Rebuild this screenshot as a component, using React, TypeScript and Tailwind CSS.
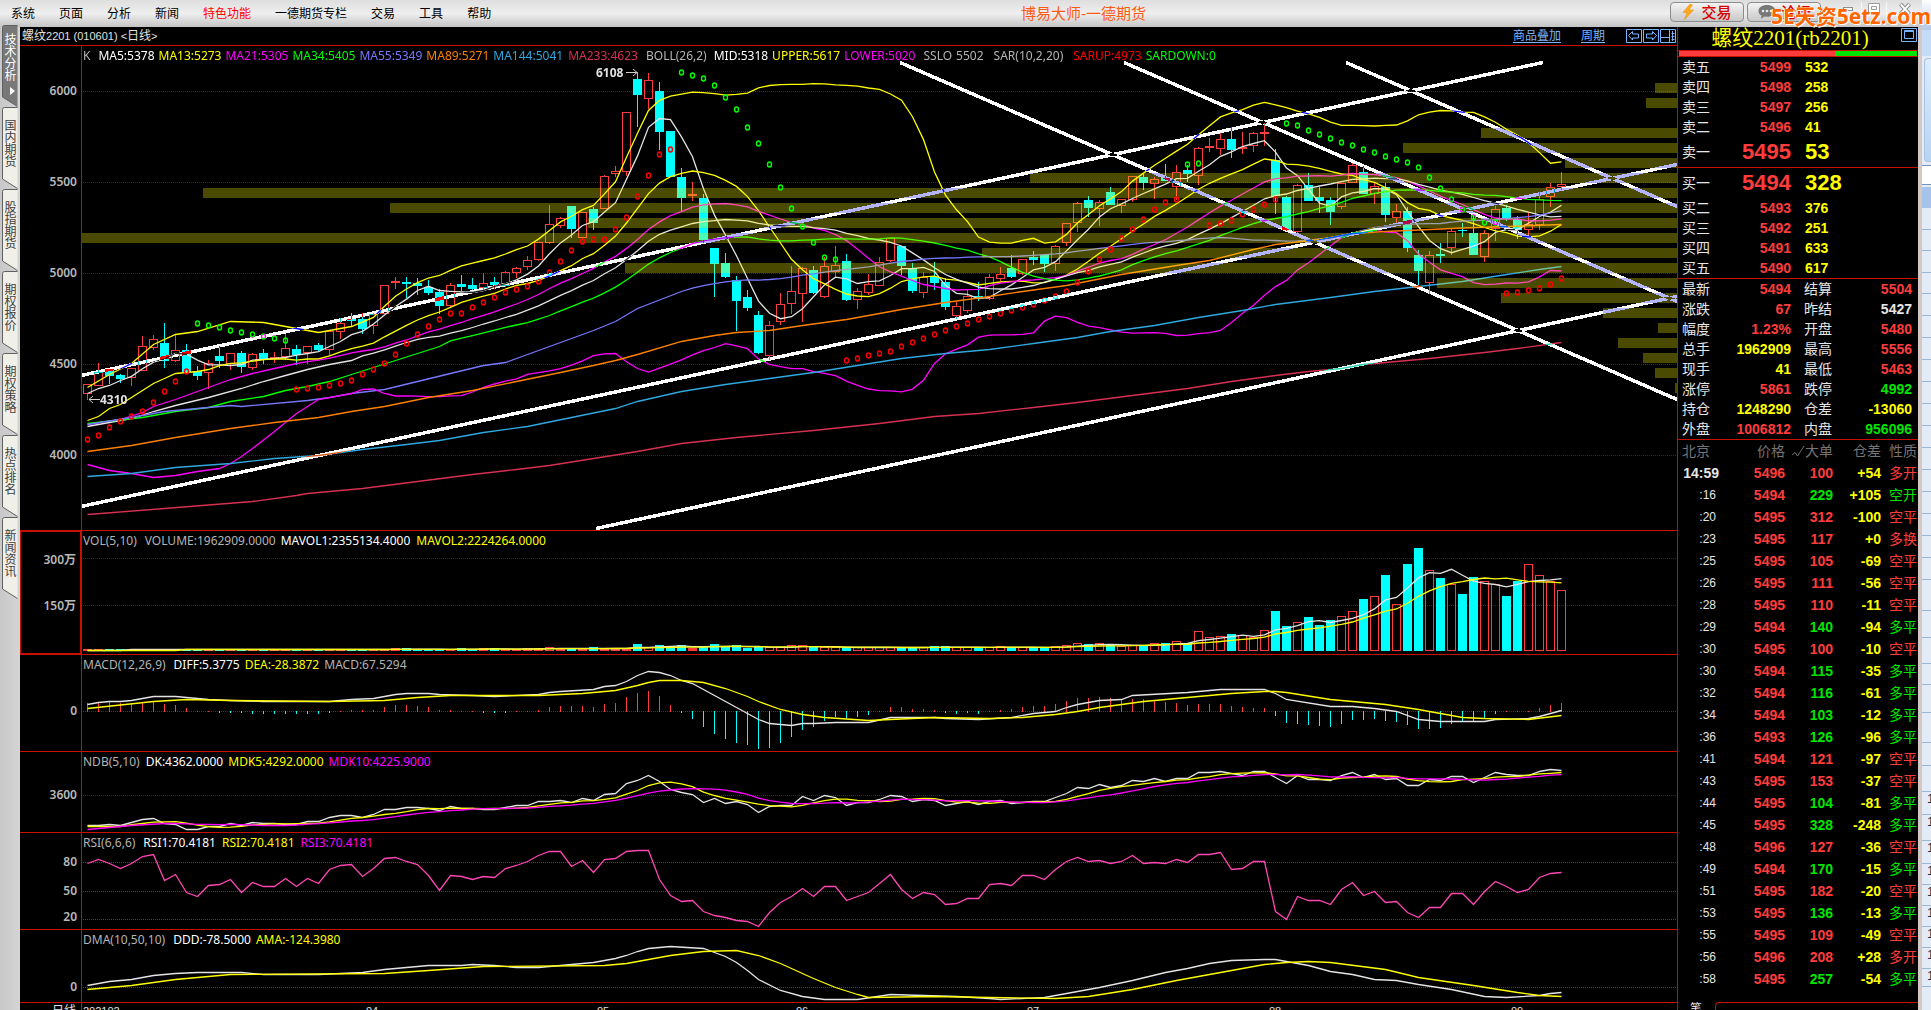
import React from "react";

const LEFT = 82;
const RIGHT = 1677;
const STEP = 11;
const cx = (i: number) => 87 + STEP * i;

const RED = "#ff3c3c";
const CYAN = "#00ffff";
const YELLOW = "#ffff00";
const MAGENTA = "#ff00ff";
const WHITE = "#e4e4e4";

// Each candle: direction (u/d), high, body top, body bottom, low.
const CANDLES = `
u 384 384 394 400;u 363 372 386 386;d 369 369 376 384;d 374 375 379 383;u 368 368 378 386;u 336 346 371 371;u 335 339 348 350;d 323 343 361 368;u 335 350 361 362;d 344 350 372 372;
d 366 371 376 380;u 360 363 373 389;d 346 356 361 368;u 353 353 364 370;d 351 353 367 373;u 353 354 368 370;d 349 353 359 364;u 352 357 358 363;u 334 348 357 360;d 345 349 355 365;
u 346 346 353 364;d 343 345 350 351;u 331 331 350 356;u 318 323 332 339;d 313 319 321 326;d 313 319 329 334;u 313 314 326 334;u 285 285 314 314;u 277 281 283 289;d 277 282 284 298;
d 278 283 286 295;d 280 287 293 295;d 289 292 306 314;u 283 285 306 307;d 275 284 287 291;d 278 285 289 290;u 273 283 288 291;d 277 282 285 289;u 271 272 286 287;u 267 268 273 278;
u 256 260 267 270;u 242 242 260 261;u 205 224 243 244;u 217 218 226 228;d 206 206 229 238;u 212 212 238 239;d 207 209 223 230;u 175 176 209 209;u 166 171 174 177;u 112 112 172 176;
d 72 79 95 127;u 73 80 99 109;d 82 91 132 150;d 131 131 177 177;d 168 177 198 211;u 182 194 196 201;d 194 198 240 243;d 248 248 264 297;d 253 263 277 278;d 276 280 301 331;
d 290 297 308 311;d 311 315 353 354;u 321 325 356 360;u 293 304 322 325;u 266 291 304 314;u 267 268 294 322;d 266 270 293 294;u 257 266 297 298;u 246 265 272 277;d 254 261 300 301;
u 288 291 300 309;u 274 284 293 295;u 257 262 286 286;u 238 238 261 262;d 246 246 266 275;d 263 268 291 293;u 272 277 293 298;d 262 277 283 290;d 278 282 307 310;u 302 306 316 319;
u 289 296 311 313;d 282 296 298 301;u 274 277 299 300;u 267 274 279 281;d 255 268 277 278;u 259 259 274 275;d 251 257 260 265;d 255 255 264 272;u 245 246 264 271;u 223 223 243 246;
u 202 203 223 232;d 196 200 208 217;u 200 202 209 226;d 187 192 205 205;u 199 199 206 213;u 176 176 200 202;d 173 177 183 190;u 177 179 184 199;d 164 178 181 181;u 165 172 187 200;
d 165 170 174 182;u 147 148 176 185;u 138 146 147 152;u 133 139 149 155;d 127 139 150 158;u 132 147 149 154;u 132 133 146 152;u 123 132 134 146;d 149 160 196 214;d 196 197 230 231;
u 184 185 232 233;d 173 185 201 201;d 187 197 201 213;d 197 200 212 225;u 183 183 207 209;u 163 165 183 183;d 166 172 194 194;u 182 186 194 204;d 183 187 215 222;u 204 211 218 223;
d 207 211 248 252;d 250 255 271 286;u 251 255 283 294;d 243 254 256 263;u 229 231 248 255;d 223 230 231 237;d 216 233 255 255;u 230 233 257 262;u 206 209 229 241;d 205 208 218 221;
d 216 219 230 239;u 212 224 230 235;u 192 199 225 230;u 183 187 197 207;u 172 184 187 190`
  .trim()
  .split(";")
  .map((row) => {
    const [dir, h, t, b, l] = row.trim().split(" ");
    return { up: dir === "u", high: +h, top: +t, bottom: +b, low: +l };
  });

const nums = (s: string) => s.trim().split(/\s+/).map(Number);

const CLOSES = CANDLES.map((c) => (c.up ? c.top : c.bottom));

type Pt = [number, number];
const pts = (s: string): Pt[] =>
  s.trim().split(/\s+/).map((p) => p.split(",").map(Number) as Pt);

function average(values: number[], n: number, lead: string): Pt[] {
  const out: Pt[] = pts(lead);
  for (let i = n - 1; i < values.length; i++) {
    let sum = 0;
    for (let k = 0; k < n; k++) sum += values[i - k];
    out.push([i, sum / n]);
  }
  return out;
}

function band(values: number[], n: number, side: number, lead: string): Pt[] {
  const out: Pt[] = pts(lead);
  for (let i = n; i < values.length; i++) {
    const win = values.slice(i - n + 1, i + 1);
    const mean = win.reduce((a, b) => a + b, 0) / n;
    const sd = Math.sqrt(win.reduce((a, b) => a + (b - mean) ** 2, 0) / (n - 1));
    out.push([i, mean + side * 2 * sd]);
  }
  return out;
}

function Line({ data, color }: { data: Pt[]; color: string }) {
  return (
    <polyline
      fill="none"
      stroke={color}
      strokeWidth={1.3}
      points={data.map(([i, y]) => `${cx(i) + 0.5},${(y + 0.5).toFixed(1)}`).join(" ")}
    />
  );
}

function Plot({ top, height, children }: { top: number; height: number; children: React.ReactNode }) {
  return (
    <svg
      className="absolute inset-0 h-full w-full"
      viewBox={`${LEFT} ${top} ${RIGHT - LEFT} ${height}`}
      preserveAspectRatio="none"
      aria-hidden="true"
    >
      {children}
    </svg>
  );
}

function Grid({ ys, color = "#960000" }: { ys: number[]; color?: string }) {
  return (
    <>
      {ys.map((y) => (
        <line key={y} x1={LEFT + 1} x2={RIGHT} y1={y + 0.5} y2={y + 0.5} stroke={color} strokeDasharray="1 1" />
      ))}
    </>
  );
}

const PROFILE: Pt[] = [
  [83, 1655], [98, 1646], [128, 1481], [143, 1403], [158, 1565], [173, 1030], [188, 203], [203, 390],
  [218, 588], [233, 81], [248, 982], [263, 625], [278, 1437], [293, 1501], [308, 1603], [323, 1658],
  [338, 1618], [353, 1643], [368, 1655], [383, 1675],
];

const TRENDS = [
  [81, 375, 1543, 62], [81, 506, 1677, 164], [596, 528, 1677, 296],
  [900, 62, 1677, 399], [1124, 62, 1677, 301], [1346, 62, 1677, 206],
];

// Parabolic SAR runs: first index, colour, then one level for each bar.
const SAR: { start: number; color: string; ys: number[] }[] = [
  { start: 0, color: "#ff0000", ys: nums("439 435 427 421 416 411 402 391 381 371") },
  { start: 10, color: "#00ff00", ys: nums("323 325 327 330 332 334 336 338 340") },
  { start: 19, color: "#ff0000", ys: nums("389 388 387 385 383 380 374 369 363 354 343 334 326 319 313 313 307 302 297 292 289 286 281 272 261 250 241 239 239 229 217 196 175 154 149") },
  { start: 54, color: "#00ff00", ys: nums("72 75 78 85 97 109 127 143 164 187 208 226 242 257 259") },
  { start: 69, color: "#ff0000", ys: nums("360 358 355 353 351 346 342 338 334 330 326 323 319 316 313 310 307 304 300 296 291 282 271 259 249 238 229 219 209 202 199") },
  { start: 100, color: "#00ff00", ys: nums("164 163") },
  { start: 102, color: "#ff0000", ys: nums("225 223 220 214 209 204 199") },
  { start: 109, color: "#00ff00", ys: nums("123 125 130 134 138 142 145 149 152 156 159 162 167 177 188 199 209 217 222 222") },
  { start: 129, color: "#ff0000", ys: nums("293 292 290 288 284 278") },
];

function PricePlot() {
  return (
    <Plot top={46} height={484}>
      <rect x={LEFT} y={46} width={RIGHT - LEFT} height={484} fill="#000" />
      <Grid ys={[91, 182, 273, 364, 455]} />
      <g shapeRendering="crispEdges">
        {CANDLES.map((c, i) => {
          const x = cx(i);
          const color = c.up ? RED : CYAN;
          return (
            <g key={i}>
              {c.high < c.top && <rect x={x} y={c.high} width={1} height={c.top - c.high} fill={color} />}
              {c.low > c.bottom && <rect x={x} y={c.bottom} width={1} height={c.low - c.bottom} fill={color} />}
              {c.up ? (
                <rect x={x - 3.5} y={c.top + 0.5} width={8} height={Math.max(1, c.bottom - c.top - 1)} fill="none" stroke={color} />
              ) : (
                <rect x={x - 4} y={c.top} width={9} height={c.bottom - c.top} fill={color} />
              )}
            </g>
          );
        })}
      </g>
      <Line color={WHITE} data={average(CLOSES, 5, "0,393 1,388 2,385 3,380")} />
      <Line color={YELLOW} data={average(CLOSES, 13, "0,420 1,416 2,408 3,404 4,397 5,390 6,383 7,378 8,373 9,372 10,371 11,369")} />
      <Line color={MAGENTA} data={average(CLOSES, 21, "0,424 3,419 5,412 6,406 8,399 10,391 11,387 13,379 15,373 17,368 19,363")} />
      <Line color={WHITE} data={average(CLOSES, 26, "0,426 4,418 6,411 8,405 11,397 14,388 16,381 18,375 20,369 22,364 24,360")} />
      <Line color="#00ff00" data={average(CLOSES, 34, "0,423 5,417 8,411 11,407 13,401 16,396 18,390 20,386 22,381 24,374 26,367 28,360 30,353 32,346")} />
      <Line color="#7878ff" data={average(CLOSES, 55, "0,424 4,417 7,411 9,409 13,405 14,406 20,400 22,397 24,393 27,389 30,381 33,373 36,365 38,362 40,354 43,342 46,330 48,321 50,308")} />
      <Line color={YELLOW} data={band(CLOSES, 26, -1, "0,387 2,374 4,363 6,344 8,334 10,331 13,321 16,322 19,328 21,332 24,326")} />
      <Line color={MAGENTA} data={band(CLOSES, 26, 1, "0,464 2,470 4,473 6,477 8,475 10,471 12,468 13,463 14,456 15,448 17,431 19,413 21,399 24,393 25,389")} />
      <Line color="#ff8000" data={pts("0,451 4,445 8,437 13,428 17,422 21,417 24,411 27,406 31,397 35,390 39,381 43,372 46,365 48,360 50,354 54,341 57,335 59,332 62,330 65,325 69,319 74,309 78,302 82,296 85,291 89,285 94,274 99,265 102,260 106,249 108,244 112,239 115,233 118,231 124,228 129,226 134,224")} />
      <Line color="#2fa8e0" data={pts("0,476 4,473 8,467 13,463 17,458 21,455 25,449 29,444 32,440 36,432 40,426 44,417 48,408 50,401 54,391 58,384 62,378 66,372 70,365 74,358 78,353 82,349 86,343 90,337 93,331 97,325 101,317 105,310 108,304 113,297 117,291 121,286 125,281 129,274 132,269 134,266")} />
      <Line color="#d83050" data={pts("0,514 7,508 15,501 19,495 20,493 25,488 30,481 35,474 39,469 42,465 46,458 50,451 54,443 59,437 66,430 72,423 77,416 81,413 86,407 90,402 95,395 100,388 104,381 108,375 111,371 114,368 116,364 122,358 127,352 130,348 134,342")} />
      {PROFILE.map(([y, x]) => (
        <rect key={y} x={x} y={y} width={RIGHT - x} height={10} fill="#ffff00" fillOpacity={0.29} />
      ))}
      {SAR.map((run) =>
        run.ys.map((y, k) => (
          <ellipse key={`${run.start}-${k}`} cx={cx(run.start + k) + 0.5} cy={y + 0.5} rx={2} ry={2.5} fill="none" stroke={run.color} strokeWidth={1.4} />
        )),
      )}
      {TRENDS.map(([x1, y1, x2, y2]) => (
        <line
          key={`${x1}-${y1}`}
          x1={x1}
          y1={y1 + 0.5}
          x2={x2}
          y2={y2 + 0.5}
          stroke="#fff"
          strokeWidth={3.5}
          shapeRendering="crispEdges"
          className="mix-blend-difference"
        />
      ))}
      <g fill="#e0e0e0" className="text-[12px] font-bold [font-family:'Noto_Sans','Liberation_Sans',sans-serif]">
        <text x={596} y={77}>6108</text>
        <text x={100} y={404}>4310</text>
      </g>
      <path d="M626 72.5h11m-4-3.500l4 3.500l-4 3.500M100 399.500h-11m4-3.500l-4 3.500l4 3.500" fill="none" stroke="#d0d0d0" />
    </Plot>
  );
}

const VOL_TOPS = nums(`
649 649 649 649 649 649 649 649 649 649 649 649 649 649 649 649 649 649 649 649 649 649 649 649 649 649 649 649 648 648
649 649 649 649 648 649 648 648 649 649 648 648 647 648 648 649 647 648 648 648 644 647 645 646 645 648 647 644 646 645
648 647 647 647 645 645 647 647 647 647 647 647 647 647 647 647 647 646 646 647 647 647 647 646 647 647 647 647 646 645
643 644 643 645 646 645 645 643 643 641 643 631 637 636 634 635 637 630 611 626 622 617 625 620 616 611 599 596 575 604
564 548 570 578 584 594 577 581 584 596 581 564 575 581 590`);

const MACD = nums(`
8 9 9 8 7 8 10 7 6 3 0 0 -1 -1 -1 -2 -2 -2 -2 -2 -2 -2 -1 0 1 1 1 4 6 6 5 4 1 1 0 0 -1 -1 -1 0 0 1 4 5 5 5 4 7 8 14
18 20 15 6 -1 -7 -15 -22 -27 -31 -33 -37 -36 -31 -25 -18 -15 -9 -5 -6 -5 -3 0 4 4 2 2 1 -1 -2 -1 -2 0 1 2 4 5 5 7 10
13 13 14 13 12 12 12 10 9 8 6 7 7 7 5 4 3 3 -4 -11 -12 -13 -14 -15 -12 -8 -8 -7 -9 -10 -13 -17 -17 -16 -12 -9 -9 -6 -2 0
0 0 3 6 8`);

const DK = nums(`
825 825 824 825 822 819 818 823 824 829 829 826 826 823 825 822 823 823 824 824 821 821 817 815 815 817 814 809 809 807
807 808 810 806 808 808 809 809 807 805 805 801 801 800 802 798 800 794 793 783 780 775 781 789 792 794 802 798 803 801
804 812 806 805 805 796 800 795 797 805 802 802 799 795 796 801 799 800 805 803 801 804 801 800 803 802 801 801 797 793
787 788 784 787 785 780 781 778 781 778 778 772 772 771 773 775 771 771 777 783 775 779 779 780 775 772 777 774 779 778
785 785 779 780 776 776 782 777 772 774 775 775 771 769 770`);

const RSI = nums(`
863 859 863 868 863 856 854 880 874 892 896 885 884 879 892 882 886 886 878 886 878 883 869 865 864 876 868 858 857 861
864 875 890 875 876 879 876 877 868 865 861 855 851 851 866 860 872 859 858 851 850 850 879 895 901 900 911 915 917 920
921 926 912 902 896 888 896 886 886 900 896 892 883 874 889 898 892 894 904 903 898 898 884 883 885 875 875 879 869 861
857 861 860 863 861 855 863 862 863 859 862 854 854 852 869 868 861 861 911 919 896 900 900 904 889 882 895 891 902 901
912 917 907 907 893 893 904 891 881 886 892 889 877 873 872`);

function VolumePlot() {
  return (
    <Plot top={531} height={123}>
      <Grid ys={[558, 605]} />
      <g shapeRendering="crispEdges">
        {VOL_TOPS.map((top, i) => {
          const x = cx(i);
          const h = 651 - top;
          return CANDLES[i].up && h > 3 ? (
            <rect key={i} x={x - 3.5} y={top + 0.5} width={8} height={h - 1} fill="none" stroke={RED} />
          ) : (
            <rect key={i} x={x - 4} y={top} width={9} height={h} fill={CANDLES[i].up ? RED : CYAN} />
          );
        })}
      </g>
      <Line color={WHITE} data={average(VOL_TOPS, 5, "0,650 3,650")} />
      <Line color={YELLOW} data={average(VOL_TOPS, 10, "0,650 8,650")} />
    </Plot>
  );
}

function MacdPlot() {
  return (
    <Plot top={655} height={96}>
      <Grid ys={[711]} color="#c00000" />
      <g shapeRendering="crispEdges">
        {MACD.map((v, i) => (
          <rect key={i} x={cx(i)} y={v >= 0 ? 712 - v - 1 : 711} width={1} height={Math.abs(v) + 1} fill={v >= 0 ? RED : CYAN} />
        ))}
      </g>
      <Line color={WHITE} data={pts("0,704 1,702 2,701 3,701 4,700 5,698 6,696 8,696 9,697 11,699 13,700 16,701 22,701 24,699 26,698 27,696 28,694 29,693 31,693 32,694 35,695 37,696 41,694 42,692 43,691 46,689 47,686 48,685 49,681 50,675 51,671 52,672 53,675 54,680 55,683 56,689 57,695 58,701 59,707 60,713 61,719 62,723 64,725 65,723 66,723 68,722 71,722 73,717 77,717 78,718 81,719 84,717 86,713 88,711 89,707 90,704 92,700 94,699 95,695 100,692 103,689 107,689 108,693 109,699 113,706 115,706 117,708 119,711 121,719 123,721 127,721 128,719 131,718 132,716 133,713 134,710")} />
      <Line color={YELLOW} data={pts("0,708 6,701 9,699 13,700 22,701 27,700 30,697 33,695 41,695 45,693 48,690 50,685 51,682 52,680 54,680 56,682 58,688 60,696 61,701 63,709 65,714 67,717 71,720 77,717 82,718 85,717 88,714 90,711 92,707 96,701 100,697 104,693 107,691 108,691 109,692 113,699 118,704 121,709 123,713 125,717 127,718 131,719 134,715")} />
    </Plot>
  );
}

function NdbPlot() {
  return (
    <Plot top={752} height={80}>
      <Grid ys={[795]} />
      <Line color={WHITE} data={DK.map((y, i) => [i, y] as Pt)} />
      <Line color={YELLOW} data={average(DK, 5, "0,826 3,826")} />
      <Line color={MAGENTA} data={average(DK, 10, "0,829 4,825 7,823 8,823")} />
    </Plot>
  );
}

function RsiPlot() {
  return (
    <Plot top={833} height={96}>
      <Grid ys={[862, 891, 919]} color="#c01010" />
      <Line color="#ff46b4" data={RSI.map((y, i) => [i, y] as Pt)} />
    </Plot>
  );
}

function DmaPlot() {
  return (
    <Plot top={930} height={72}>
      <Grid ys={[987]} color="#c01010" />
      <Line color={WHITE} data={pts("0,985 2,981 4,979 6,975 8,973 10,972 14,972 16,974 21,974 25,972 27,969 31,965 34,965 35,964 37,965 39,967 41,967 43,965 46,962 48,958 49,955 50,951 51,948 53,946 56,948 57,952 58,956 59,962 60,970 61,979 63,990 65,996 67,999 70,999 73,994 76,995 79,996 82,998 83,999 87,997 89,993 92,987 95,980 98,972 100,968 102,963 104,960 107,959 108,959 109,961 111,965 113,971 115,974 117,979 119,980 121,984 124,989 127,996 129,997 132,995 133,993 134,992")} />
      <Line color={YELLOW} data={pts("0,989 4,985 8,979 13,974 27,973 31,970 36,966 47,965 49,963 50,961 51,959 53,955 56,951 59,950 61,955 63,963 66,978 68,987 70,994 71,997 77,996 82,997 88,998 91,996 95,989 99,980 103,972 107,964 109,962 111,961 113,962 118,969 121,977 126,985 130,992 132,995 134,996")} />
    </Plot>
  );
}

type Legend = [string, string][];
const G = "text-[#b4b4b4]";
const H = "mr-1 text-[#b4b4b4]";
const W = "text-white mr-px";
const Y = "text-[#ffff00] mr-px";
const M = "text-[#ff00ff]";

const PANELS: {
  name: string;
  top: number;
  height: number;
  legend: Legend;
  ticks: [string, number][];
  plot: React.ReactNode;
  boxed?: boolean;
}[] = [
  {
    name: "K",
    top: 46,
    height: 484,
    legend: [
      ["K", "text-[#b4b4b4] mr-1"], ["MA5:5378", "text-white"], ["MA13:5273", "text-[#ffff00]"], ["MA21:5305", M],
      ["MA34:5405", "text-[#00ff00]"], ["MA55:5349", "text-[#7878ff]"], ["MA89:5271", "text-[#ff8000]"],
      ["MA144:5041", "text-[#2fa8e0] mr-px"], ["MA233:4623", "text-[#d83050] mr-1"], ["BOLL(26,2)", "text-[#b4b4b4] mr-[3px]"],
      ["MID:5318", "text-white"], ["UPPER:5617", "text-[#ffff00]"], ["LOWER:5020", "text-[#ff00ff] mr-1"], ["SSLO", G],
      ["5502", "text-[#b4b4b4] mr-1.5"], ["SAR(10,2,20)", "text-[#b4b4b4] mr-1.5"],
      ["SARUP:4973", "text-[#ff0000]"], ["SARDOWN:0", "text-[#00ff00]"],
    ],
    ticks: [["6000", 91], ["5500", 182], ["5000", 273], ["4500", 364], ["4000", 455]],
    plot: <PricePlot />,
  },
  {
    name: "VOL",
    top: 531,
    height: 123,
    legend: [["VOL(5,10)", H], ["VOLUME:1962909.0000", "text-[#b4b4b4] mr-px"], ["MAVOL1:2355134.4000", "text-white mr-0.5"], ["MAVOL2:2224264.0000", Y]],
    ticks: [["300万", 559], ["150万", 606]],
    plot: <VolumePlot />,
    boxed: true,
  },
  {
    name: "MACD",
    top: 655,
    height: 96,
    legend: [["MACD(12,26,9)", H], ["DIFF:5.3775", W], ["DEA:-28.3872", Y], ["MACD:67.5294", G]],
    ticks: [["0", 711]],
    plot: <MacdPlot />,
  },
  {
    name: "NDB",
    top: 752,
    height: 80,
    legend: [["NDB(5,10)", "mr-0.5 text-[#b4b4b4]"], ["DK:4362.0000", W], ["MDK5:4292.0000", Y], ["MDK10:4225.9000", M]],
    ticks: [["3600", 795]],
    plot: <NdbPlot />,
  },
  {
    name: "RSI",
    top: 833,
    height: 96,
    legend: [["RSI(6,6,6)", H], ["RSI1:70.4181", "text-white mr-0.5"], ["RSI2:70.4181", "text-[#ffff00] mr-0.5"], ["RSI3:70.4181", M]],
    ticks: [["80", 862], ["50", 891], ["20", 917]],
    plot: <RsiPlot />,
  },
  {
    name: "DMA",
    top: 930,
    height: 72,
    legend: [["DMA(10,50,10)", H], ["DDD:-78.5000", W], ["AMA:-124.3980", Y]],
    ticks: [["0", 987]],
    plot: <DmaPlot />,
  },
];

function MenuBar() {
  const items = ["系统", "页面", "分析", "新闻", "特色功能", "一德期货专栏", "交易", "工具", "帮助"];
  return (
    <header className="relative flex h-[27px] shrink-0 items-center justify-between bg-gradient-to-b from-[#dedede] via-[#efefef] to-[#c4c4c4] text-black">
      <nav className="flex gap-6 pl-[11px] text-[12px] leading-none">
        {items.map((t) => (
          <button key={t} type="button" className={t === "特色功能" ? "text-[#ff0000]" : ""}>
            {t}
          </button>
        ))}
      </nav>
      <h1 className="absolute left-[1021px] text-[15px] leading-none text-[#ff5a14]">博易大师-一德期货</h1>
      <div className="flex h-full items-start gap-[3px] pt-[2px]">
        <button type="button" className="flex h-[20px] w-[74px] items-center justify-center gap-[7px] rounded border border-[#8c8c8c] bg-gradient-to-b from-[#f4f4f4] to-[#c8c8c8] text-[15px] leading-none font-medium text-[#d80000]">
          <svg width="12" height="16" viewBox="0 0 12 16" aria-hidden="true">
            <path d="M8 0L1 8.500h4L2.500 15.500L11.500 6H7L10.500 1z" fill="#ffa91e" stroke="#e88a00" strokeWidth=".5" />
          </svg>
          交易
        </button>
        <button type="button" className="flex h-[20px] w-[74px] items-center gap-[5px] rounded border border-[#8c8c8c] bg-gradient-to-b from-[#f4f4f4] to-[#c8c8c8] pl-[10px] text-[15px] leading-none font-medium text-[#d80000]">
          <svg width="18" height="14" viewBox="0 0 18 14" aria-hidden="true">
            <path d="M9 0C4 0 .5 2.500.5 6c0 2 1 3.500 3 4.600L3 13.800l3.500-2.200L9 11.800c5 0 8.500-2.500 8.500-5.800S14 0 9 0z" fill="#787878" />
            <circle cx="5" cy="6" r="1.300" fill="#e8e8e8" />
            <circle cx="9" cy="6" r="1.300" fill="#e8e8e8" />
            <circle cx="13" cy="6" r="1.300" fill="#e8e8e8" />
          </svg>
          论坛
        </button>
        <div className="flex w-[98px] justify-end">
          <button type="button" aria-label="最小化" className="flex h-[14px] w-7 items-center justify-center border-r border-[#f8f8f8]">
            <span className="h-[4px] w-[10px] border border-[#8c8c8c] bg-white" />
          </button>
          <button type="button" aria-label="还原" className="flex h-[14px] w-[25px] items-center justify-center border-r border-[#f8f8f8]">
            <svg width="12" height="12" viewBox="0 0 12 12" aria-hidden="true">
              <path d="M.5.5h11v9H.5zM3.500 3.500h5v3h-5z" fill="#fff" stroke="#9a9a9a" />
            </svg>
          </button>
          <button type="button" aria-label="关闭" className="flex h-[14px] w-[35px] items-center justify-center">
            <svg width="12" height="12" viewBox="0 0 12 12" aria-hidden="true">
              <path d="M1.500 1l9 10M10.500 1l-9 10" stroke="#8c8c8c" strokeWidth="4" />
              <path d="M1.800 1.400l8.400 9.200M10.200 1.400l-8.400 9.200" stroke="#fff" strokeWidth="2" />
            </svg>
          </button>
        </div>
      </div>
    </header>
  );
}

function SideTabs() {
  const tabs = ["技术分析", "国内期货", "股指期货", "期权报价", "期权策略", "热点排名", "新闻资讯"];
  return (
    <nav className="relative z-10 flex w-5 shrink-0 flex-col bg-gradient-to-r from-[#c8c8c8] to-[#d4d4d4]">
      <div className="-mt-[2px] flex flex-col">
        {tabs.map((t, i) => (
          <button
            key={t}
            type="button"
            className={
              i === 0
                ? "relative flex h-[82px] flex-col items-center justify-start pt-[9px] pl-px text-white"
                : "relative flex h-[82px] flex-col items-center justify-start pt-[13px] pl-px text-[#404040]"
            }
          >
            <svg className="absolute top-0 left-[2px] h-[82px] w-4" viewBox="0 0 16 82" aria-hidden="true">
              <path d="M15.500.5H2.500Q.5.500.5 2.500V72L15.500 81.500" fill={i === 0 ? "#787878" : "#f0efe8"} stroke="#606060" />
            </svg>
            {t.split("").map((ch, k) => (
              <span key={k} className="relative text-[12px] leading-3">
                {ch}
              </span>
            ))}
            {i === 0 && <span className="relative mt-[5px] ml-1 h-0 w-0 border-y-[4px] border-l-[5px] border-y-transparent border-l-white" />}
          </button>
        ))}
      </div>
    </nav>
  );
}

const MONTHS: [string, number][] = [["202102", 83], ["04", 366], ["05", 597], ["06", 796], ["07", 1027], ["08", 1269], ["09", 1511]];

function ChartArea() {
  return (
    <main className="flex min-w-0 flex-1 flex-col">
      <div className="flex h-[19px] shrink-0 items-center justify-between border-b border-[#c80f00] pl-[2px] text-[#e0e0e0]">
        <h2 className="text-[12px] leading-none">
          螺纹<span className="text-[11px]">2201 (010601) &lt;</span>日线<span className="text-[11px]">&gt;</span>
        </h2>
        <div className="flex items-center text-[12px] leading-none text-[#78b4ff]">
          <a href="#overlay" className="mr-5 underline underline-offset-2">商品叠加</a>
          <a href="#period" className="mr-[21px] underline underline-offset-2">周期</a>
          <div className="flex gap-px pr-px">
            <button type="button" aria-label="左移">
              <svg width="16" height="14" viewBox="0 0 16 14" fill="none" stroke="#78b4ff" aria-hidden="true">
                <path d="M.5.5h15v13H.5zM2.500 6.500l4-4v2.500h6v4h-6v2z" />
              </svg>
            </button>
            <button type="button" aria-label="右移">
              <svg width="16" height="14" viewBox="0 0 16 14" fill="none" stroke="#78b4ff" aria-hidden="true">
                <path d="M.5.5h15v13H.5zM13.500 6.500l-4-4v2.500h-6v4h6v2z" />
              </svg>
            </button>
            <button type="button" aria-label="布局">
              <svg width="16" height="14" viewBox="0 0 16 14" fill="none" stroke="#78b4ff" aria-hidden="true">
                <path d="M.5.5h15v13H.5zM.5 8.500h9M9.500.5v13M12.500 2v10M11.500 4.500h3M11.500 7.500h3M11.500 10.500h3" />
              </svg>
            </button>
          </div>
        </div>
      </div>
      <div className="grid min-h-0 flex-1 grid-rows-[485fr_124fr_97fr_81fr_97fr_73fr] [font-family:'Noto_Sans','Noto_Sans_CJK_SC',sans-serif]">
        {PANELS.map((p) => (
          <section key={p.name} aria-label={p.name} className="flex min-h-0 border-b border-[#c80f00]">
            <div className={p.boxed ? "relative w-[62px] shrink-0 border border-r-2 border-[#c80f00]" : "relative w-[62px] shrink-0 border-r border-[#c80f00]"}>
              {p.ticks.map(([label, y]) => (
                <span
                  key={label}
                  className="absolute right-1 -translate-y-1/2 text-[12px] leading-none font-semibold text-[#b8b8b8]"
                  style={{ top: `${((y - p.top) / p.height) * 100}%` }}
                >
                  {label}
                </span>
              ))}
            </div>
            <div className="relative isolate min-w-0 flex-1 overflow-hidden">
              {p.plot}
              <p className="relative flex gap-1 pt-[3px] pl-px text-[12px] leading-[14px] whitespace-nowrap">
                {p.legend.map(([t, c]) => (
                  <span key={t} className={c}>
                    {t}
                  </span>
                ))}
              </p>
            </div>
          </section>
        ))}
      </div>
      <footer className="flex h-[7px] shrink-0 overflow-hidden text-[#e0e0e0]">
        <div className="w-[62px] shrink-0 border-r border-[#c80f00] pt-[2px] pr-[5px] text-right text-[12px] leading-3">日线</div>
        <div className="relative flex-1">
          {MONTHS.map(([t, x]) => (
            <span key={t} className="absolute top-[2px] text-[11px] leading-3" style={{ left: `${((x - LEFT) / (RIGHT - LEFT)) * 100}%` }}>
              {t}
            </span>
          ))}
        </div>
      </footer>
    </main>
  );
}

const TONE: Record<string, string> = {
  r: "text-[#ff3c3c]",
  g: "text-[#00e600]",
  y: "text-[#ffff00]",
  w: "text-[#e6e6e6]",
};

const ASKS = [["卖五", "5499", "532"], ["卖四", "5498", "258"], ["卖三", "5497", "256"], ["卖二", "5496", "41"], ["卖一", "5495", "53"]];
const BIDS = [["买一", "5494", "328"], ["买二", "5493", "376"], ["买三", "5492", "251"], ["买四", "5491", "633"], ["买五", "5490", "617"]];

const SUMMARY = [
  ["最新", "5494", "r", "结算", "5504", "r"],
  ["涨跌", "67", "r", "昨结", "5427", "w"],
  ["幅度", "1.23%", "r", "开盘", "5480", "r"],
  ["总手", "1962909", "y", "最高", "5556", "r"],
  ["现手", "41", "y", "最低", "5463", "r"],
  ["涨停", "5861", "r", "跌停", "4992", "g"],
  ["持仓", "1248290", "y", "仓差", "-13060", "y"],
  ["外盘", "1006812", "r", "内盘", "956096", "g"],
];

const TRADES = `14:59 5496 100 +54 多开 r
:16 5494 229 +105 空开 g
:20 5495 312 -100 空平 r
:23 5495 117 +0 多换 r
:25 5495 105 -69 空平 r
:26 5495 111 -56 空平 r
:28 5495 110 -11 空平 r
:29 5494 140 -94 多平 g
:30 5495 100 -10 空平 r
:30 5494 115 -35 多平 g
:32 5494 116 -61 多平 g
:34 5494 103 -12 多平 g
:36 5493 126 -96 多平 g
:41 5494 121 -97 空平 r
:43 5495 153 -37 空平 r
:44 5495 104 -81 多平 g
:45 5495 328 -248 多平 g
:48 5496 127 -36 空平 r
:49 5494 170 -15 多平 g
:51 5495 182 -20 空平 r
:53 5495 136 -13 多平 g
:55 5495 109 -49 空平 r
:56 5496 208 +28 多开 r
:58 5495 257 -54 多平 g`
  .split("\n")
  .map((l) => l.split(" "));

function Depth({ rows, label }: { rows: string[][]; label: string }) {
  return (
    <div className="shrink-0 border-b border-[#c80f00]">
      <table aria-label={label} className="w-full table-fixed leading-none">
        <colgroup>
          <col className="w-[40px]" />
          <col className="w-[73px]" />
          <col />
        </colgroup>
        <tbody>
          {rows.map(([name, price, qty]) => {
            const best = name.endsWith("一");
            return (
              <tr key={name} className={best ? "h-[30px]" : "h-5"}>
                <th scope="row" className="pl-1 text-left text-[14px] font-normal text-[#e6e6e6]">{name}</th>
                <td className={best ? "text-right text-[22px] font-bold text-[#ff3c3c]" : "text-right text-[14px] font-bold text-[#ff3c3c]"}>{price}</td>
                <td className={best ? "pl-[14px] text-[22px] font-bold text-[#ffff00]" : "pl-[14px] text-[14px] font-bold text-[#ffff00]"}>{qty}</td>
              </tr>
            );
          })}
        </tbody>
      </table>
    </div>
  );
}

function QuotePanel() {
  return (
    <aside className="flex w-[241px] shrink-0 flex-col overflow-hidden border-l border-[#c80f00] bg-black">
      <div className="relative flex h-6 shrink-0 items-center justify-center border-b border-[#c80f00] pr-[16px]">
        <h2 className="text-[21px] leading-none text-[#ffff00] [font-family:'Liberation_Serif','Noto_Sans_CJK_SC',serif]">螺纹2201(rb2201)</h2>
        <button type="button" aria-label="窗口" className="absolute top-px right-px">
          <svg width="16" height="14" viewBox="0 0 16 14" fill="none" stroke="#78b4ff" aria-hidden="true">
            <path d="M.5.5h15v13H.5zM3.500 2.500h9v8h-9zM3.500 3.500h9" />
          </svg>
        </button>
      </div>
      <div className="flex h-[6px] shrink-0 border-b border-[#c80f00] px-px">
        <div className="w-[156px] bg-[#ff3c3c]" />
        <div className="flex-1 bg-[#00e600]" />
      </div>
      <Depth rows={ASKS} label="卖盘" />
      <Depth rows={BIDS} label="买盘" />
      <div className="shrink-0 border-b border-[#c80f00]">
        <table aria-label="行情" className="w-full table-fixed leading-none">
          <colgroup>
            <col className="w-[40px]" />
            <col className="w-[73px]" />
            <col className="w-[46px]" />
            <col />
          </colgroup>
          <tbody>
            {SUMMARY.map(([a, av, ac, b, bv, bc]) => (
              <tr key={a} className="h-5">
                <th scope="row" className="pl-1 text-left text-[14px] font-normal text-[#e6e6e6]">{a}</th>
                <td className={`text-right text-[14px] font-bold ${TONE[ac]}`}>{av}</td>
                <th scope="row" className="pl-[13px] text-left text-[14px] font-normal text-[#e6e6e6]">{b}</th>
                <td className={`pr-[6px] text-right text-[14px] font-bold ${TONE[bc]}`}>{bv}</td>
              </tr>
            ))}
          </tbody>
        </table>
      </div>
      <table aria-label="成交明细" className="w-full table-fixed leading-none whitespace-nowrap">
        <colgroup>
          <col className="w-[41px]" />
          <col className="w-[66px]" />
          <col className="w-[48px]" />
          <col className="w-[48px]" />
          <col />
        </colgroup>
        <thead>
          <tr className="h-[22px] text-[14px] text-[#747474] *:font-normal">
            <th scope="col" className="pl-1 text-left">北京</th>
            <th scope="col" className="text-right">价格</th>
            <th scope="col">
              <span className="flex items-center justify-end">
                <svg width="13" height="12" viewBox="0 0 13 12" fill="none" stroke="#747474" aria-hidden="true">
                  <path d="M0 10l3-2.500L5.500 11L12 1" />
                </svg>
                大单
              </span>
            </th>
            <th scope="col" className="text-right">仓差</th>
            <th scope="col" className="pr-px text-right">性质</th>
          </tr>
        </thead>
        <tbody>
          {TRADES.map(([time, price, qty, diff, kind, tone], i) => (
            <tr key={i} className="h-[22px] text-[14px]">
              <td className={i === 0 ? "text-right font-bold text-[#e6e6e6]" : "pr-[3px] text-right text-[12px] text-[#e6e6e6]"}>{time}</td>
              <td className="text-right font-bold text-[#ff3c3c]">{price}</td>
              <td className={`text-right font-bold ${TONE[tone]}`}>{qty}</td>
              <td className="text-right font-bold text-[#ffff00]">{diff}</td>
              <td className={`pr-px text-right ${TONE[tone]}`}>{kind}</td>
            </tr>
          ))}
        </tbody>
      </table>
      <div className="mt-auto flex h-2 shrink-0 overflow-hidden">
        <span className="w-[37px] pt-px pl-3 text-[12px] leading-3 text-[#e6e6e6]">笔</span>
        <span className="flex-1 rounded-tl-sm border-t border-l border-[#c80f00]" />
      </div>
    </aside>
  );
}

const SHEET_ROWS = nums("22 21 22 21 22 22 22 22 22 22 22 22 22 22 22 22 22 31 27 26 21 28 30 23 26 23 26 23 21 21 21 21 21 18");

function Backdrop() {
  return (
    <div className="flex w-[9px] shrink-0 flex-col overflow-hidden bg-[#e3ebf7]" aria-hidden="true">
      <div className="h-[30px] shrink-0 bg-gradient-to-b from-white to-[#b4c8e8]" />
      <div className="h-[26px] shrink-0 bg-[#c4dcfa]" />
      <div className="mt-[2px] ml-[2px] h-[104px] shrink-0 rounded-l border border-r-0 border-[#a8c4e4] bg-gradient-to-b from-[#dcecff] to-[#b8d4f0]" />
      <div className="mt-[3px] h-[20px] shrink-0 border-y border-[#6f93bf] bg-white" />
      <div className="mt-[2px] h-[21px] shrink-0 bg-[#a4c4ec]" />
      {SHEET_ROWS.map((h, i) => (
        <div key={i} className="shrink-0 overflow-hidden border-b border-[#9db6cf] pl-[5px] text-[13px] leading-none text-[#203040]" style={{ height: h }}>
          {i > 24 ? "1" : ""}
        </div>
      ))}
    </div>
  );
}

export default function App() {
  return (
    <div className="relative flex h-screen w-full overflow-hidden bg-black [font-family:'Liberation_Sans','Noto_Sans_CJK_SC',sans-serif]">
      <div className="flex min-w-0 flex-1 flex-col">
        <MenuBar />
        <div className="flex min-h-0 flex-1">
          <SideTabs />
          <ChartArea />
          <QuotePanel />
          <div className="w-1 shrink-0 bg-[#d4c8c4]" />
        </div>
      </div>
      <Backdrop />
      <div className="absolute top-[5px] right-0 z-20 text-[21px] leading-[22px] font-bold whitespace-nowrap text-[#ff6600] [font-family:'Open_Sans','Noto_Sans_CJK_SC',sans-serif] [text-shadow:1px_1px_0_#fff,-1px_0_0_#fff]">
        5E天资5etz.com
      </div>
    </div>
  );
}
